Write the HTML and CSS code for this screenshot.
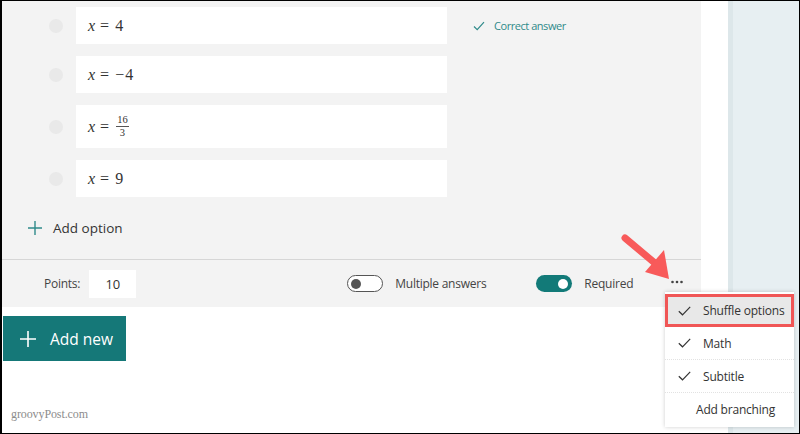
FILE: index.html
```html
<!DOCTYPE html>
<html>
<head>
<meta charset="utf-8">
<link rel="stylesheet" href="styles.css">
</head>
<body>
<div class="frame">
  <main class="main">
    <section class="card">
      <div class="options">
        <div class="option">
          <span class="radio"></span>
          <div class="box"><span class="math"><i>x</i><span class="eq">=</span>4</span></div>
          <div class="correct">
            <svg width="12" height="10" viewBox="0 0 12 10"><path d="M1 5.5 L4.2 8.6 L11 1.2" fill="none" stroke="#2f8a8a" stroke-width="1.2"/></svg>
            <span>Correct answer</span>
          </div>
        </div>
        <div class="option">
          <span class="radio"></span>
          <div class="box"><span class="math"><i>x</i><span class="eq">=</span><span class="minus">−</span>4</span></div>
        </div>
        <div class="option tall">
          <span class="radio"></span>
          <div class="box"><span class="math"><i>x</i><span class="eq">=</span><span class="frac"><span class="num">16</span><span class="den">3</span></span></span></div>
        </div>
        <div class="option">
          <span class="radio"></span>
          <div class="box"><span class="math"><i>x</i><span class="eq">=</span>9</span></div>
        </div>
      </div>
      <div class="add-option">
        <svg width="14" height="14" viewBox="0 0 14 14"><path d="M7 0 V14 M0 7 H14" stroke="#2f8a8a" stroke-width="1.4"/></svg>
        <span>Add option</span>
      </div>
      <div class="card-footer">
        <span class="points-label">Points:</span>
        <span class="points-input">10</span>
        <span class="toggle off"><span class="knob"></span></span>
        <span class="toggle-label">Multiple answers</span>
        <span class="toggle on"><span class="knob"></span></span>
        <span class="toggle-label">Required</span>
        <svg class="dots" width="12" height="4" viewBox="0 0 12 4"><circle cx="1.5" cy="2" r="1.3" fill="#444"/><circle cx="6" cy="2" r="1.3" fill="#444"/><circle cx="10.5" cy="2" r="1.3" fill="#444"/></svg>
      </div>
    </section>
    <button class="add-new">
      <svg width="16" height="16" viewBox="0 0 16 16"><path d="M8 0 V16 M0 8 H16" stroke="#fff" stroke-width="1.6"/></svg>
      <span>Add new</span>
    </button>
    <div class="watermark">groovyPost.com</div>
  </main>
  <div class="gutter"></div>
  <aside class="side"></aside>

  <svg class="arrow" width="70" height="64" viewBox="0 0 70 64">
    <path d="M10 10 L41 36" stroke="#f85a5a" stroke-width="7" stroke-linecap="round" fill="none"/>
    <polygon points="30,44 49,22 54,51" fill="#f85a5a"/>
  </svg>

  <div class="menu">
    <div class="menu-item selected"><svg class="check" width="13" height="10" viewBox="0 0 13 10"><path d="M0.8 5.2 L4.5 8.8 L12.2 0.8" fill="none" stroke="#333" stroke-width="1.2"/></svg><span>Shuffle options</span></div>
    <div class="menu-item"><svg class="check" width="13" height="10" viewBox="0 0 13 10"><path d="M0.8 5.2 L4.5 8.8 L12.2 0.8" fill="none" stroke="#333" stroke-width="1.2"/></svg><span>Math</span></div>
    <div class="menu-item"><svg class="check" width="13" height="10" viewBox="0 0 13 10"><path d="M0.8 5.2 L4.5 8.8 L12.2 0.8" fill="none" stroke="#333" stroke-width="1.2"/></svg><span>Subtitle</span></div>
    <div class="menu-item plain">Add branching</div>
  </div>
</div>
</body>
</html>
```

FILE: styles.css
```css
* { box-sizing: border-box; }
html, body { margin: 0; padding: 0; background: #fff; }
body { font-family: "Open Sans", "Noto Sans", sans-serif; color: #323232; }

.frame {
  position: relative;
  width: 800px;
  height: 434px;
  border: 1px solid #000;
  border-left-width: 2px;
  display: grid;
  grid-template-columns: 699px 27px 1fr;
  overflow: hidden;
}

.main { display: flex; flex-direction: column; background: #fff; }

.card {
  height: 306px;
  background: #f3f3f3;
  display: flex;
  flex-direction: column;
}

.options {
  padding-top: 6px;
  display: flex;
  flex-direction: column;
  gap: 12px;
}

.option {
  display: flex;
  align-items: center;
  height: 37px;
  padding-left: 47px;
}
.option.tall { height: 43px; }

.radio {
  width: 14px;
  height: 14px;
  border-radius: 50%;
  background: #e9e9e9;
  margin-right: 13px;
  flex: none;
}

.box {
  width: 371px;
  height: 100%;
  background: #fff;
  display: flex;
  align-items: center;
  padding-left: 12px;
}

.math {
  font-family: "Liberation Serif", "DejaVu Serif", serif;
  font-size: 16px;
  color: #333;
  display: flex;
  align-items: center;
}
.math i { font-style: italic; }
.eq { margin: 0 6px 0 5px; }
.minus { margin-right: 1px; }

.frac {
  display: inline-flex;
  flex-direction: column;
  align-items: center;
  font-size: 10.5px;
  line-height: 10px;
  margin-left: 1px;
}
.frac .num { border-bottom: 1px solid #555; padding: 0 1px 1px; }
.frac .den { padding-top: 1px; }

.correct {
  margin-left: 26px;
  display: flex;
  align-items: center;
  gap: 9px;
  color: #2f8a8a;
  font-size: 11px;
  letter-spacing: -0.45px;
}

.add-option {
  height: 62px;
  display: flex;
  align-items: center;
  padding-left: 26px;
  gap: 11px;
  font-size: 13.5px;
  color: #333;
}

.card-footer {
  border-top: 1px solid #d6d6d6;
  flex: 1;
  display: flex;
  align-items: center;
  padding-left: 42px;
  font-size: 12px;
  letter-spacing: -0.25px;
  color: #444;
}

.points-input {
  margin-left: 9px;
  width: 47px;
  height: 28px;
  background: #fff;
  display: flex;
  align-items: center;
  justify-content: center;
  font-size: 13px;
  color: #333;
}

.toggle {
  width: 36px;
  height: 17px;
  border-radius: 9px;
  display: flex;
  align-items: center;
  padding: 0 3px;
  flex: none;
}
.toggle .knob { width: 10px; height: 10px; border-radius: 50%; }
.toggle.off { margin-left: 211px; border: 1.5px solid #555; background: #fff; }
.toggle.off .knob { background: #555; }
.toggle.on { margin-left: 50px; background: #127a78; justify-content: flex-end; padding: 0 4px; }
.toggle.on .knob { background: #fff; }

.toggle-label { margin-left: 12px; }

.dots {
  margin-left: 38px;
  margin-top: -3px;
  flex: none;
}

.add-new {
  margin: 9px 0 0 1px;
  width: 123px;
  height: 45px;
  background: #157878;
  border: none;
  color: #fff;
  display: flex;
  align-items: center;
  padding-left: 17px;
  gap: 14px;
  font-family: "Open Sans", "Noto Sans", sans-serif;
  font-size: 15.5px;
}

.watermark {
  margin-top: 46px;
  padding-left: 9px;
  font-family: "Liberation Serif", "DejaVu Serif", serif;
  font-size: 12px;
  letter-spacing: -0.1px;
  color: #8c8c8c;
}

.gutter { background: #fff; }
.side {
  background: #e7eff2;
  border-left: 5px solid #dde7ea;
}

.arrow { position: absolute; left: 613px; top: 227px; }

.menu {
  position: absolute;
  left: 663px;
  top: 291px;
  width: 129px;
  height: 135px;
  background: #fff;
  box-shadow: 0 0 4px rgba(0,0,0,0.2);
  display: flex;
  flex-direction: column;
  padding-top: 3px;
  font-size: 12px;
  letter-spacing: -0.2px;
  color: #333;
}

.menu-item {
  height: 33px;
  display: flex;
  align-items: center;
  padding-left: 13px;
  border-bottom: 1px dotted #e2e2e2;
  white-space: nowrap;
}
.menu-item .check { margin-right: 12px; flex: none; }
.menu-item.selected {
  height: 33px;
  background: #e8e8e8;
  border: 3px solid #f05656;
  padding-left: 10px;
  margin-top: -1px;
}
.menu-item.plain { border-bottom: none; padding-left: 31px; }
```
